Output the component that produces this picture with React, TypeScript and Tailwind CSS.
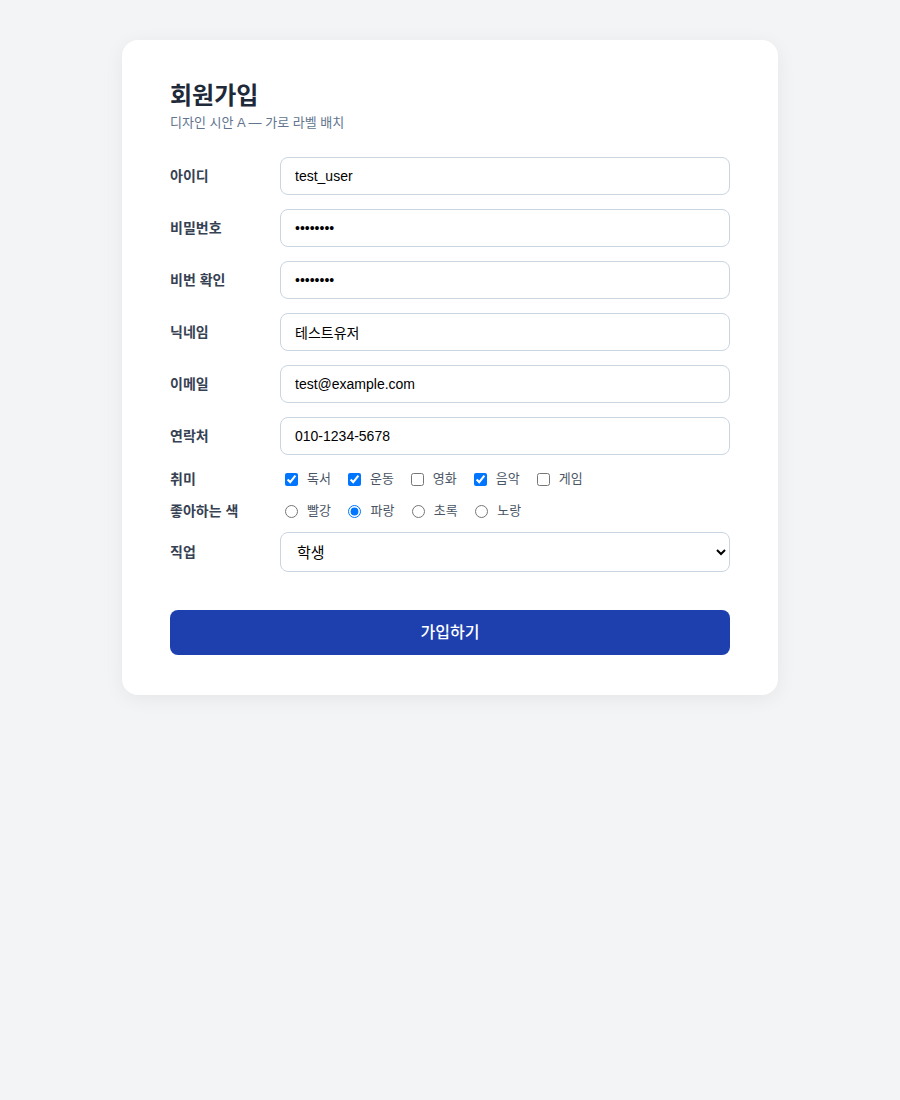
import { useState } from "react";

const font = "font-['Liberation_Sans','Noto_Sans_CJK_KR',sans-serif]";

const TextRow = ({ label, type, value }: { label: string; type: string; value: string }) => {
    const [v, setV] = useState(value);
    return (
        <div className="flex items-center">
            <label className="w-[110px] shrink-0 text-[14px] font-semibold text-gray-700">{label}</label>
            <input
                type={type}
                value={v}
                onChange={(e) => setV(e.target.value)}
                className="h-[38px] flex-1 rounded-lg border border-slate-300 bg-white px-3.5 text-[14px] text-black outline-none"
            />
        </div>
    );
};

const hobbies = [
    { name: "독서", checked: true },
    { name: "운동", checked: true },
    { name: "영화", checked: false },
    { name: "음악", checked: true },
    { name: "게임", checked: false },
];

const colors = ["빨강", "파랑", "초록", "노랑"];

export default function App() {
    const [color, setColor] = useState("파랑");
    const [job, setJob] = useState("학생");

    return (
        <div className={`min-h-[1100px] bg-gray-100 pt-10 ${font}`}>
            <div className="mx-auto w-[656px] rounded-2xl bg-white px-12 pt-10 pb-10 shadow-[0_4px_20px_rgba(0,0,0,0.06)]">
                <h1 className="text-[24px] font-bold leading-8 text-gray-800">회원가입</h1>
                <p className="mt-[1px] text-[13px] leading-5 text-slate-500">디자인 시안 A — 가로 라벨 배치</p>

                <div className="mt-[24px] flex flex-col gap-[14px]">
                    <TextRow label="아이디" type="text" value="test_user" />
                    <TextRow label="비밀번호" type="password" value="password" />
                    <TextRow label="비번 확인" type="password" value="password" />
                    <TextRow label="닉네임" type="text" value="테스트유저" />
                    <TextRow label="이메일" type="email" value="test@example.com" />
                    <TextRow label="연락처" type="tel" value="010-1234-5678" />
                </div>

                <div className="mt-[14px] flex h-5 items-center">
                    <span className="w-[110px] shrink-0 text-[14px] font-semibold text-gray-700">취미</span>
                    <div className="flex items-center gap-[17px] pl-[5px]">
                        {hobbies.map((h) => (
                            <label key={h.name} className="flex items-center gap-[9px] text-[13px] text-gray-600">
                                <input type="checkbox" defaultChecked={h.checked} className="m-0 h-[13px] w-[13px]" />
                                {h.name}
                            </label>
                        ))}
                    </div>
                </div>

                <div className="mt-3 flex h-5 items-center">
                    <span className="w-[110px] shrink-0 text-[14px] font-semibold text-gray-700">좋아하는 색</span>
                    <div className="flex items-center gap-[17.5px] pl-[5px]">
                        {colors.map((c) => (
                            <label key={c} className="flex items-center gap-[9px] text-[13px] text-gray-600">
                                <input
                                    type="radio"
                                    name="color"
                                    checked={color === c}
                                    onChange={() => setColor(c)}
                                    className="m-0 h-[13px] w-[13px]"
                                />
                                {c}
                            </label>
                        ))}
                    </div>
                </div>

                <div className="mt-[11px] flex items-center">
                    <span className="w-[110px] shrink-0 text-[14px] font-semibold text-gray-700">직업</span>
                    <select
                        value={job}
                        onChange={(e) => setJob(e.target.value)}
                        className="h-10 flex-1 appearance-auto rounded-lg border border-slate-300 bg-white px-3 text-[15px] text-black"
                    >
                        <option>학생</option>
                        <option>회사원</option>
                        <option>자영업</option>
                        <option>기타</option>
                    </select>
                </div>

                <button className="mt-[38px] h-[45px] w-full rounded-lg bg-[#1e40af] text-[16px] font-medium text-white">
                    가입하기
                </button>
            </div>
        </div>
    );
}
